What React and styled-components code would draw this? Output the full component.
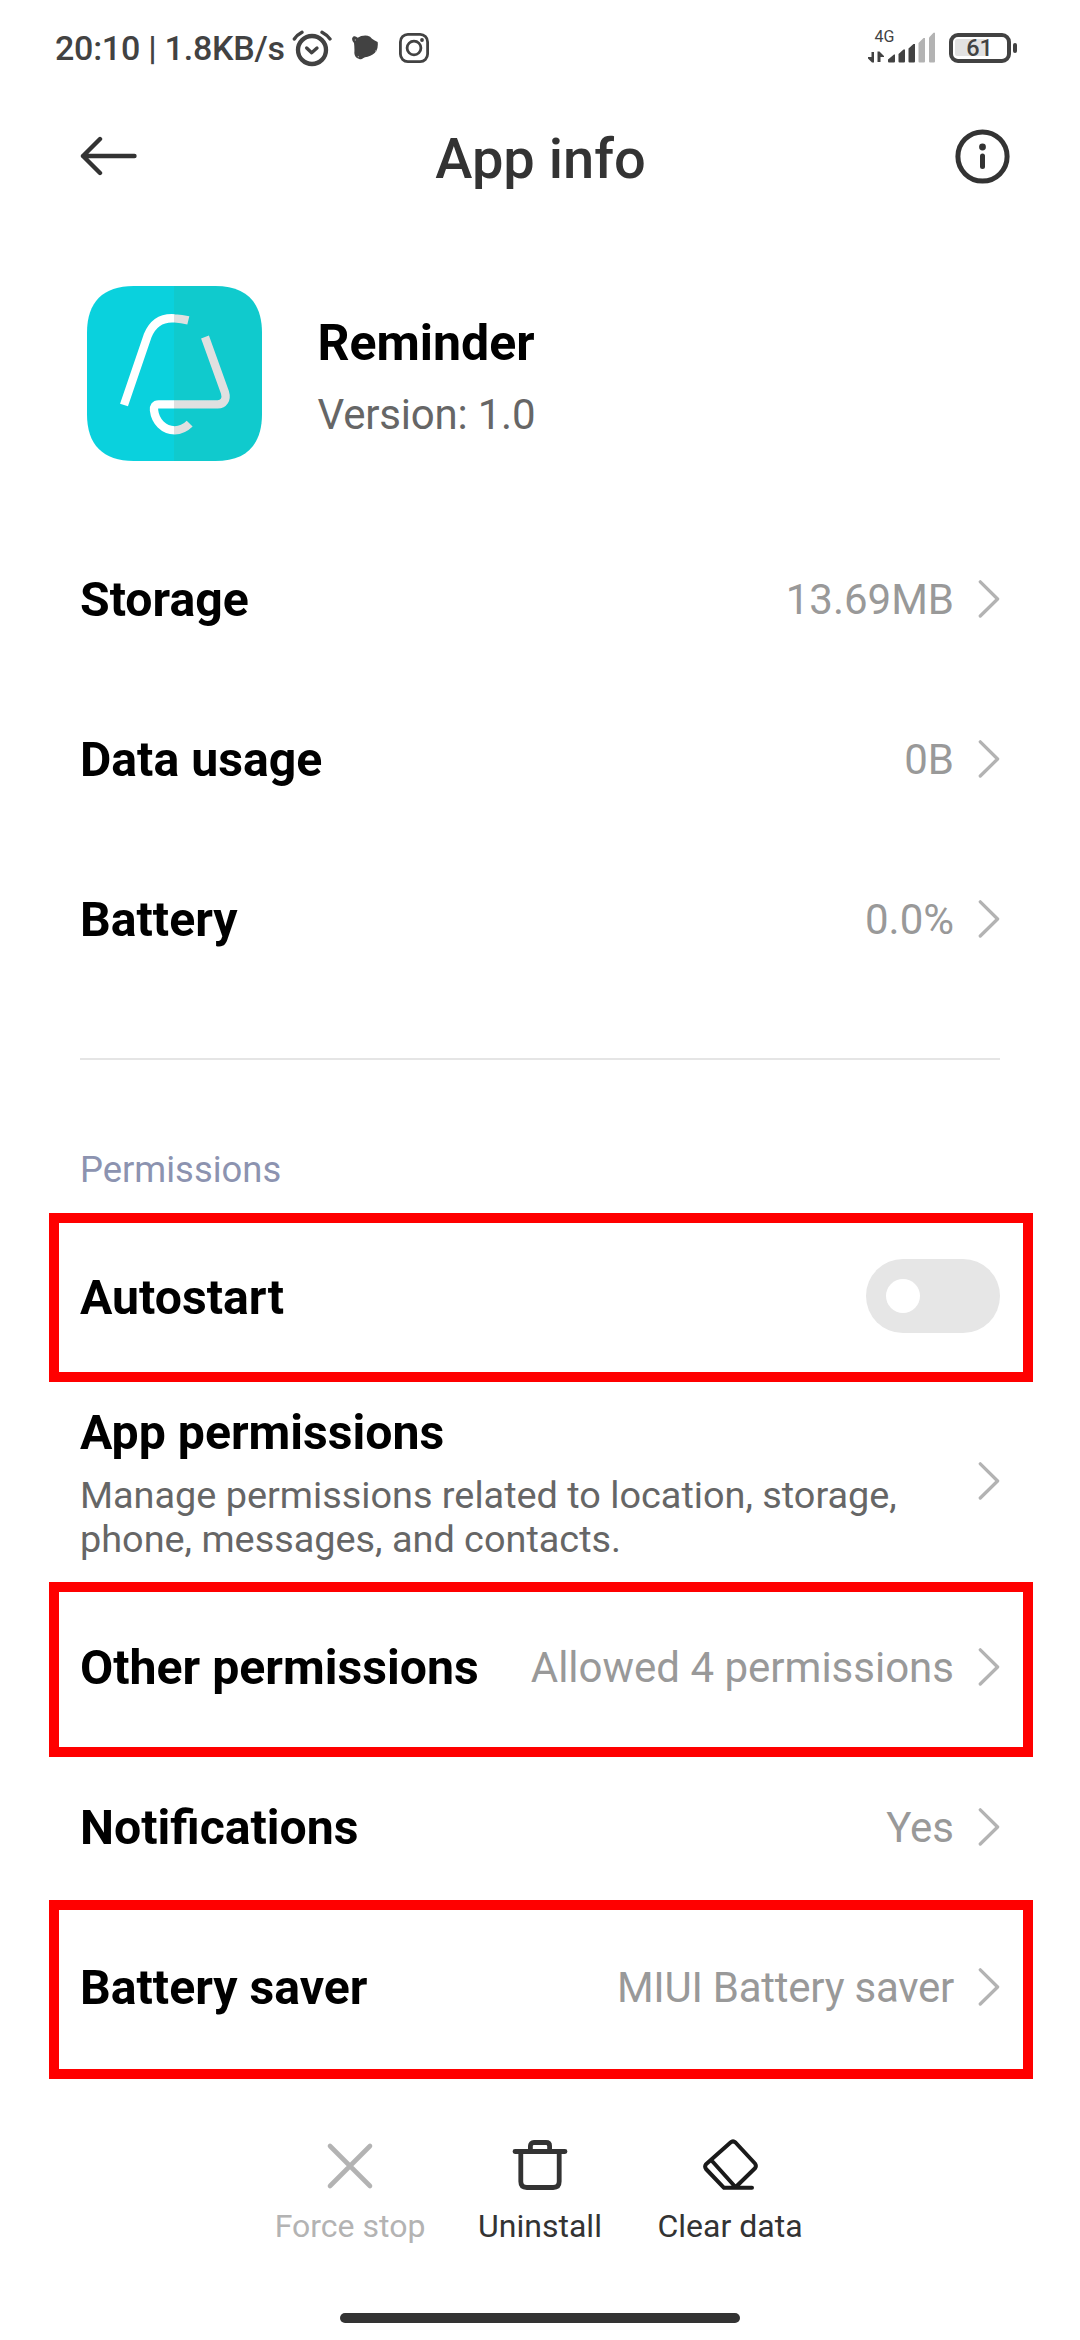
import React from 'react';
import styled, { createGlobalStyle } from 'styled-components';

const GlobalStyle = createGlobalStyle`
  *, *::before, *::after { box-sizing: border-box; }
  body { margin: 0; background: #fff; }
`;

const Screen = styled.main`
  width: 1080px;
  height: 2340px;
  display: flex;
  flex-direction: column;
  background: #fff;
  color: #000;
  font-family: Roboto, "Noto Sans", sans-serif;
  overflow: hidden;
`;

const StatusBar = styled.div`
  height: 96px;
  padding: 0 63px 1px 55px;
  display: flex;
  justify-content: space-between;
  align-items: center;
  color: #424242;
`;

const StatusGroup = styled.div`
  display: flex;
  align-items: center;
`;

const Clock = styled.span`
  width: 237px;
  font-size: 34px;
  line-height: 40px;
  font-weight: 500;
  letter-spacing: -0.25px;
  white-space: nowrap;
`;

const Glyph = styled.svg`
  display: block;
  flex: none;
  width: ${(p) => p.$w}px;
  height: ${(p) => p.$h}px;
  margin-left: ${(p) => p.$ml || 0}px;
`;

const BatteryShell = styled.div`
  position: relative;
  width: 62px;
  height: 30px;
  margin-left: 12px;
  border: 4.5px solid #424242;
  border-radius: 9px;
  padding: 2px;
  display: flex;
`;

const BatteryFill = styled.div`
  width: 31px;
  height: 17px;
  border-radius: 2px;
  background: #e2e2e2;
`;

const BatteryLevel = styled.span`
  position: absolute;
  inset: -2px 0 -3px -1px;
  display: flex;
  align-items: center;
  justify-content: center;
  font-size: 23.5px;
  font-weight: 500;
`;

const BatteryTip = styled.div`
  width: 4px;
  height: 10px;
  margin-left: 2px;
  border-radius: 2px;
  background: #424242;
`;

const Header = styled.header`
  height: 120px;
  padding: 0 70px 0 80px;
  display: flex;
  align-items: center;
  justify-content: space-between;
  color: #333;
`;

const Title = styled.h1`
  margin: 0 11px 0 0;
  padding-top: 6px;
  font-size: 56px;
  line-height: 66px;
  font-weight: 500;
`;

const AppSummary = styled.section`
  height: 304px;
  padding: 70px 80px 0 87px;
  display: flex;
  align-items: flex-start;
`;

const AppText = styled.div`
  margin-left: 55.5px;
  padding-top: 27px;
`;

const AppName = styled.h2`
  margin: 0;
  font-size: 50px;
  line-height: 60px;
  font-weight: 700;
`;

const Version = styled.p`
  margin: 12px 0 0;
  font-size: 42px;
  line-height: 60px;
  letter-spacing: -0.2px;
  color: #666;
`;

const Row = styled.div`
  height: ${(p) => p.$height || 160}px;
  padding: 0 80px ${(p) => p.$lift || 0}px;
  display: flex;
  align-items: center;
  justify-content: space-between;
`;

const HighlightedRow = styled(Row)`
  margin: 0 47px 0 49px;
  padding-left: 21px;
  padding-right: 23px;
  border: 10px solid #f00;
`;

const Label = styled.span`
  font-size: 48.2px;
  line-height: 56px;
  font-weight: 700;
  white-space: nowrap;
`;

const Trailing = styled.div`
  display: flex;
  align-items: center;
`;

const Value = styled.span`
  font-size: 42px;
  line-height: 56px;
  letter-spacing: ${(p) => p.$tracking || 0}px;
  color: #999;
  white-space: nowrap;
`;

const Divider = styled.hr`
  flex: none;
  width: 920px;
  height: 2px;
  margin: 58px 80px 0;
  border: 0;
  background: #e5e5e5;
`;

const SectionTitle = styled.h3`
  height: 153px;
  margin: 0;
  padding: 88px 80px 0;
  font-size: 36.4px;
  line-height: 44px;
  font-weight: 400;
  color: #8c93b0;
`;

const SwitchTrack = styled.div`
  width: 134px;
  height: 74px;
  margin-bottom: 3px;
  padding: 20px;
  border-radius: 37px;
  background: #e6e6e6;
`;

const SwitchThumb = styled.div`
  width: 34px;
  height: 34px;
  border-radius: 50%;
  background: #fff;
`;

const Described = styled.div`
  padding-top: 2px;
  display: flex;
  flex-direction: column;
  gap: 12px;
`;

const Description = styled.span`
  width: 840px;
  font-size: 37.85px;
  line-height: 44px;
  color: #666;
`;

const Actions = styled.footer`
  flex: 1;
  padding-top: 56px;
  display: flex;
  flex-direction: column;
  align-items: center;
  justify-content: space-between;
`;

const ActionBar = styled.div`
  display: flex;
  width: 570px;
  justify-content: space-between;
`;

const Action = styled.div`
  width: 190px;
  display: flex;
  flex-direction: column;
  align-items: center;
  gap: 15px;
  color: ${(p) => (p.$disabled ? '#b3b3b3' : '#333')};
  font-size: 32px;
  line-height: 40px;
  white-space: nowrap;
`;

const HomeBar = styled.div`
  width: 400px;
  height: 10px;
  margin-bottom: 17px;
  border-radius: 5px;
  background: #333;
`;

const Chevron = () => (
  <Glyph $w={22} $h={40} $ml={24} viewBox="0 0 22 40" fill="none" stroke="#b3b3b3" strokeWidth="3.3" strokeLinecap="round" strokeLinejoin="round">
    <path d="M2.3 1.8 19.6 19 2.3 36" />
  </Glyph>
);

const LinkTrailing = ({ value, tracking }) => (
  <Trailing>
    {value && <Value $tracking={tracking}>{value}</Value>}
    <Chevron />
  </Trailing>
);

const AlarmIcon = () => (
  <Glyph $w={40} $h={38} viewBox="0 0 120 114" fill="none" stroke="#424242" strokeLinecap="round" strokeLinejoin="round">
    <circle cx="60" cy="63" r="42" strokeWidth="13" />
    <path d="M44 57 59 71 75 57" strokeWidth="10" />
    <path d="M7 30Q15 18 30 10M90 10Q105 18 114 30" strokeWidth="10" />
  </Glyph>
);

const BlobIcon = () => (
  <Glyph $w={26} $h={25} $ml={20} viewBox="0 0 78 75">
    <path fill="#424242" d="M5 4Q11 2 17 8Q29 0 47 2Q55 3 60 11Q68 17 77 21Q79 36 73 48Q64 61 47 65Q38 66 33 70Q28 75 20 71Q8 68 7 54Q8 39 6 24Q-2 16 1 8Z" />
    <g fill="#aaa"><circle cx="10" cy="15" r="2" /><circle cx="19" cy="65" r="2" /><circle cx="71" cy="48" r="2" /></g>
  </Glyph>
);

const InstagramIcon = () => (
  <Glyph $w={30} $h={30} $ml={21} viewBox="0 0 30 30" fill="none" stroke="#424242" strokeWidth="2.8">
    <rect x="1.4" y="1.4" width="27.2" height="27.2" rx="7.5" />
    <circle cx="15" cy="15" r="6.9" />
    <circle cx="23" cy="7" r="1.9" fill="#424242" stroke="none" />
  </Glyph>
);

const SignalIcon = () => (
  <Glyph $w={70} $h={52} viewBox="0 -8 70 52" fill="#424242">
    <text x="7.6" y="12.2" fontSize="16" fontFamily="Roboto, sans-serif">4G</text>
    <path d="M4.5 22H7V32.5H5L1 28.5V27H4.5ZM10.5 21.5H12.5L17 26V27H13.5V32H10.5Z" />
    <path d="M21 29.5 27 24.5H28V31.5Q28 32.5 27 32.5H22Q21 32.5 21 31.5Z" />
    <path d="M31.5 24 36.5 19.5H38V31.5Q38 32.5 37 32.5H32.5Q31.5 32.5 31.5 31.5Z" />
    <path d="M41.5 18.5 46.5 14H48V31.5Q48 32.5 47 32.5H42.5Q41.5 32.5 41.5 31.5Z" />
    <g fill="#b3b3b3">
      <path d="M51.5 13 56.5 8H58V31.5Q58 32.5 57 32.5H52.5Q51.5 32.5 51.5 31.5Z" />
      <path d="M62 7.5 66.5 2.7H68V31.5Q68 32.5 67 32.5H63Q62 32.5 62 31.5Z" />
    </g>
  </Glyph>
);

const BackIcon = () => (
  <Glyph $w={57} $h={40} viewBox="0 0 57 40" fill="none" stroke="currentColor" strokeWidth="4.4" strokeLinecap="round" strokeLinejoin="round">
    <path d="M20 3 3 20 20 37M3 20H54.5" />
  </Glyph>
);

const InfoIcon = () => (
  <Glyph $w={55} $h={55} viewBox="0 0 55 55" fill="none" stroke="currentColor" strokeWidth="5" strokeLinecap="round">
    <circle cx="27.5" cy="27.5" r="24.6" />
    <path d="M27.5 27V37.5" />
    <circle cx="27.5" cy="18" r="3.4" fill="currentColor" stroke="none" />
  </Glyph>
);

const ReminderIcon = () => (
  <Glyph $w={175} $h={175} viewBox="0 0 525 525">
    <defs>
      <linearGradient id="tile" gradientUnits="userSpaceOnUse" x1="0" y1="0" x2="525" y2="0">
        <stop offset="0.5" stopColor="#0ad1dd" />
        <stop offset="0.5" stopColor="#10cacd" />
      </linearGradient>
      <linearGradient id="bell" gradientUnits="userSpaceOnUse" x1="0" y1="0" x2="525" y2="0">
        <stop offset="0.5" stopColor="#fff" />
        <stop offset="0.5" stopColor="#e0e0e0" />
      </linearGradient>
    </defs>
    <path fill="url(#tile)" d="M140 0H385C477 0 525 48 525 140V385C525 477 477 525 385 525H140C48 525 0 477 0 385V140C0 48 48 0 140 0Z" />
    <g fill="none" stroke="url(#bell)" strokeWidth="25">
      <path d="M111 357 182 149C197 112 225 94 263 97Q284 98 304 103" />
      <path d="M354 153 414 320C420 340 410 355 392 355H215C204 355 200 362 201 373C205 407 230 433 263 433Q288 433 308 413" />
    </g>
  </Glyph>
);

const CloseIcon = () => (
  <Glyph $w={56} $h={56} viewBox="0 0 56 56" stroke="#b3b3b3" strokeWidth="4.6" strokeLinecap="round">
    <path d="M8 11 48 51M48 11 8 51" />
  </Glyph>
);

const TrashIcon = () => (
  <Glyph $w={56} $h={56} viewBox="0 0 56 56" fill="none" stroke="#333" strokeWidth="4.8" strokeLinecap="round" strokeLinejoin="round">
    <path d="M3 16.5H53M8.8 16.5V46.5Q8.8 52.5 14.8 52.5H41.2Q47.2 52.5 47.2 46.5V16.5M18.4 16V11Q18.4 7.5 22 7.5H34Q37.6 7.5 37.6 11V16" />
  </Glyph>
);

const EraserIcon = () => (
  <Glyph $w={56} $h={56} viewBox="0 0 56 56" fill="none" stroke="#1a1a1a" strokeWidth="4" strokeLinecap="round" strokeLinejoin="round">
    <path d="M28.5 7.5Q31 5.2 33.5 7.5L53 28.5Q54.7 31 53 33.3L33 52.8H22L4 34Q2.3 31.5 4 29.2ZM10.5 26.5 32.5 51M22 52.8H50" />
  </Glyph>
);

const USAGE = [
  ['Storage', '13.69MB'],
  ['Data usage', '0B'],
  ['Battery', '0.0%'],
];

export default function App() {
  return (
    <>
      <GlobalStyle />
      <Screen>
        <StatusBar>
          <StatusGroup>
            <Clock>20:10 | 1.8KB/s</Clock>
            <AlarmIcon />
            <BlobIcon />
            <InstagramIcon />
          </StatusGroup>
          <StatusGroup>
            <SignalIcon />
            <BatteryShell>
              <BatteryFill />
              <BatteryLevel>61</BatteryLevel>
            </BatteryShell>
            <BatteryTip />
          </StatusGroup>
        </StatusBar>

        <Header>
          <BackIcon />
          <Title>App info</Title>
          <InfoIcon />
        </Header>

        <AppSummary>
          <ReminderIcon />
          <AppText>
            <AppName>Reminder</AppName>
            <Version>Version: 1.0</Version>
          </AppText>
        </AppSummary>

        {USAGE.map(([label, value]) => (
          <Row key={label}>
            <Label>{label}</Label>
            <LinkTrailing value={value} />
          </Row>
        ))}

        <Divider />
        <SectionTitle>Permissions</SectionTitle>

        <HighlightedRow $height={169}>
          <Label>Autostart</Label>
          <SwitchTrack role="switch" aria-checked="false">
            <SwitchThumb />
          </SwitchTrack>
        </HighlightedRow>
        <Row $height={200}>
          <Described>
            <Label>App permissions</Label>
            <Description>Manage permissions related to location, storage, phone, messages, and contacts.</Description>
          </Described>
          <LinkTrailing />
        </Row>
        <HighlightedRow $height={175} $lift={4}>
          <Label>Other permissions</Label>
          <LinkTrailing value="Allowed 4 permissions" />
        </HighlightedRow>
        <Row $height={143} $lift={2}>
          <Label>Notifications</Label>
          <LinkTrailing value="Yes" />
        </Row>
        <HighlightedRow $height={179} $lift={4}>
          <Label>Battery saver</Label>
          <LinkTrailing value="MIUI Battery saver" tracking={-0.25} />
        </HighlightedRow>

        <Actions>
          <ActionBar>
            <Action $disabled>
              <CloseIcon />
              Force stop
            </Action>
            <Action>
              <TrashIcon />
              Uninstall
            </Action>
            <Action>
              <EraserIcon />
              Clear data
            </Action>
          </ActionBar>
          <HomeBar />
        </Actions>
      </Screen>
    </>
  );
}
